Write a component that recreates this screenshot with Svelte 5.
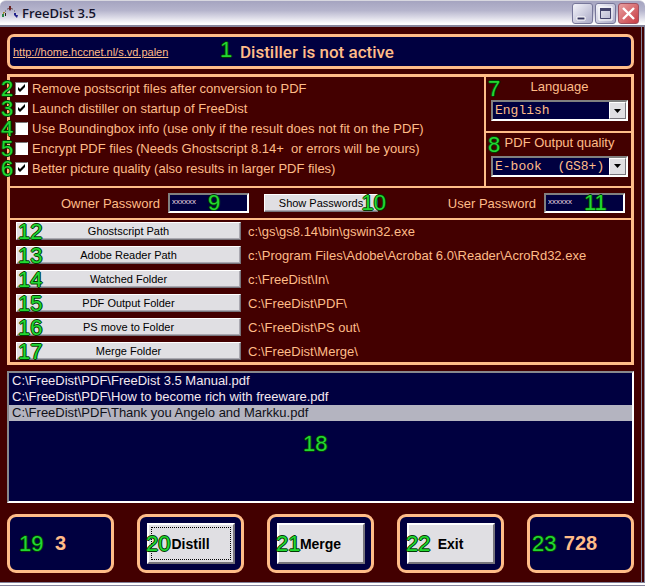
<script lang="ts">
  interface Option {
    id: number;
    label: string;
    checked: boolean;
  }

  interface Folder {
    id: number;
    label: string;
    path: string;
  }

  let options = $state<Option[]>([
    { id: 2, label: 'Remove postscript files after conversion to PDF', checked: true },
    { id: 3, label: 'Launch distiller on startup of FreeDist', checked: true },
    { id: 4, label: 'Use Boundingbox info (use only if the result does not fit on the PDF)', checked: false },
    { id: 5, label: 'Encrypt PDF files (Needs Ghostscript 8.14+  or errors will be yours)', checked: false },
    { id: 6, label: 'Better picture quality (also results in larger PDF files)', checked: true },
  ]);

  const folders: Folder[] = [
    { id: 12, label: 'Ghostscript Path', path: 'c:\\gs\\gs8.14\\bin\\gswin32.exe' },
    { id: 13, label: 'Adobe Reader Path', path: 'c:\\Program Files\\Adobe\\Acrobat 6.0\\Reader\\AcroRd32.exe' },
    { id: 14, label: 'Watched Folder', path: 'c:\\FreeDist\\In\\' },
    { id: 15, label: 'PDF Output Folder', path: 'C:\\FreeDist\\PDF\\' },
    { id: 16, label: 'PS move to Folder', path: 'C:\\FreeDist\\PS out\\' },
    { id: 17, label: 'Merge Folder', path: 'C:\\FreeDist\\Merge\\' },
  ];

  const files = [
    'C:\\FreeDist\\PDF\\FreeDist 3.5 Manual.pdf',
    'C:\\FreeDist\\PDF\\How to become rich with freeware.pdf',
    'C:\\FreeDist\\PDF\\Thank you Angelo and Markku.pdf',
  ];

  const actions = [
    { id: 20, label: 'Distill', focused: true },
    { id: 21, label: 'Merge', focused: false },
    { id: 22, label: 'Exit', focused: false },
  ];

  let selectedFile = $state(files[2]);
  let ownerPassword = $state('xxxxxx');
  let userPassword = $state('xxxxxx');
</script>

{#snippet badge(n: number, place: string)}
  <span class="badge {place}">{n}</span>
{/snippet}

{#snippet arrow()}
  <span class="arrow">
    <svg width="7" height="4" viewBox="0 0 7 4"><path d="M0 0h7L3.5 4z" fill="#000" /></svg>
  </span>
{/snippet}

<div class="window">
  <header class="titlebar">
    <svg class="app-icon" width="16" height="14" viewBox="0 0 16 14">
      <path d="M3 5h1M5 3h1M10 3h1M12 5h1" fill="none" stroke="#555" />
      <path d="M7 0h2v2h1L8 5 6 2h1z" fill="#6a2020" />
      <path d="M1 6h2v1H2v2H1z" fill="#a08a30" />
      <path d="M0 8h2v3H0z" fill="#2f8a4a" />
      <path d="M3 7h1v3H3z" fill="#222" />
      <path d="M12 7h2v2h2l-1 3-3-3z" fill="#22228a" />
    </svg>
    <h1>FreeDist 3.5</h1>
    <div class="caption-buttons">
      <button class="caption" aria-label="Minimize">
        <svg width="21" height="21" viewBox="0 0 21 21"><path d="M5 14h8v3H5z" fill="#33335c" stroke="#fff" /></svg>
      </button>
      <button class="caption" aria-label="Maximize">
        <svg width="21" height="21" viewBox="0 0 21 21">
          <path d="M4 4h13v13H4z" fill="none" stroke="#fff" />
          <path d="M5.500 6.500h10v9h-10z" fill="none" stroke="#44446c" />
          <path d="M5 5h11v3H5z" fill="#44446c" />
        </svg>
      </button>
      <button class="caption close" aria-label="Close">
        <svg width="21" height="21" viewBox="0 0 21 21"><path d="M5 5l11 11M16 5L5 16" stroke="#fff" stroke-width="2.400" /></svg>
      </button>
    </div>
  </header>

  <main>
    <section class="status">
      <a href="http://home.hccnet.nl/s.vd.palen">http://home.hccnet.nl/s.vd.palen</a>
      <strong>Distiller is not active</strong>
      {@render badge(1, 'at-status')}
    </section>

    <section class="settings">
      <div class="top">
        <div class="options">
          {#each options as option (option.id)}
            <label class="option">
              <input type="checkbox" bind:checked={option.checked} />
              <span>{option.label}</span>
              {@render badge(option.id, 'at-edge')}
            </label>
          {/each}
        </div>
        <div class="choices">
          <div class="choice">
            <label for="language">Language</label>
            <div class="combo">
              <select id="language"><option>English</option></select>
              {@render arrow()}
            </div>
            {@render badge(7, 'at-corner')}
          </div>
          <div class="choice">
            <label for="quality">PDF Output quality</label>
            <div class="combo">
              <select id="quality"><option>E-book&nbsp;&nbsp;(GS8+)</option></select>
              {@render arrow()}
            </div>
            {@render badge(8, 'at-corner')}
          </div>
        </div>
      </div>

      <div class="passwords">
        <label for="owner">Owner Password</label>
        <div class="field">
          <input id="owner" type="text" bind:value={ownerPassword} />
          {@render badge(9, 'at-middle')}
        </div>
        <button class="small show">Show Passwords{@render badge(10, 'at-end')}</button>
        <label class="user" for="user">User Password</label>
        <div class="field">
          <input id="user" type="text" bind:value={userPassword} />
          {@render badge(11, 'at-middle')}
        </div>
      </div>

      <div class="folders">
        {#each folders as folder (folder.id)}
          <div class="folder">
            <button class="small">{folder.label}{@render badge(folder.id, 'at-start')}</button>
            <span>{folder.path}</span>
          </div>
        {/each}
      </div>
    </section>

    <section class="files">
      <select size="8" aria-label="PDF files" bind:value={selectedFile}>
        {#each files as file (file)}
          <option value={file}>{file}</option>
        {/each}
      </select>
      {@render badge(18, 'at-list')}
    </section>

    <footer>
      <div class="tile count">3{@render badge(19, 'at-tile')}</div>
      {#each actions as action (action.id)}
        <div class="tile">
          <button class="action" class:focused={action.focused}>{action.label}</button>
          {@render badge(action.id, 'at-action')}
        </div>
      {/each}
      <div class="tile count">728{@render badge(23, 'at-total')}</div>
    </footer>
  </main>
</div>

<style>
  :global(body) {
    background: #fff;
  }
  .window {
    --peach: #ffbc88;
    --navy: #000040;
    --face: #e0dfe3;
    margin-right: 2px;
    font-family: 'Liberation Sans', Arial, sans-serif;
    font-size: 13px;
    color: var(--peach);
    border-bottom: 4px double #82829a;
  }
  .window * {
    box-sizing: border-box;
  }
  button,
  input,
  select {
    font: inherit;
    margin: 0;
    border-radius: 0;
  }
  .titlebar {
    display: flex;
    align-items: center;
    height: 27px;
    padding: 0 6px 0 2px;
    gap: 4px;
    border-top: 1px solid #d8d8e0;
    border-bottom: 2px solid #85859b;
    border-radius: 6px 6px 0 0;
    background: linear-gradient(#a5a4c0, #b6b5cd 40%, #dddce8 70%, #fff 95%);
    color: #14142c;
  }
  h1 {
    margin: 0;
    font-family: 'Open Sans', sans-serif;
    font-size: 13px;
    font-weight: 600;
  }
  .caption-buttons {
    display: flex;
    gap: 2px;
    margin-left: auto;
  }
  .caption {
    width: 21px;
    height: 21px;
    padding: 0;
    border: 1px solid #77779a;
    border-radius: 3px;
    background: linear-gradient(135deg, #f4f4fa, #a9a9c6);
  }
  .caption svg {
    display: block;
    margin: -1px;
  }
  .close {
    border-color: #a05060;
    background: linear-gradient(135deg, #e8a0a0, #c83c44);
  }
  main {
    display: flex;
    flex-direction: column;
    padding: 7px 7px 9px;
    background: #430000;
    border-right: 4px double #82829a;
  }
  .status {
    position: relative;
    display: flex;
    align-items: center;
    height: 35px;
    border: 3px solid var(--peach);
    border-radius: 7px;
    background: var(--navy);
  }
  .status a {
    width: 230px;
    padding-left: 3px;
    font-size: 11px;
    color: var(--peach);
  }
  strong {
    font-family: Roboto, sans-serif;
    font-size: 17px;
    font-weight: 500;
  }
  .settings {
    margin-top: 5px;
    border: 3px solid var(--peach);
  }
  .top {
    display: flex;
    border-bottom: 2px solid var(--peach);
  }
  .options {
    flex: 1;
    padding: 1px 0 8px 5px;
  }
  .option {
    position: relative;
    display: flex;
    align-items: center;
    gap: 4px;
    height: 20px;
    white-space: pre;
  }
  .option input {
    appearance: none;
    width: 13px;
    height: 13px;
    border: 1px solid;
    border-color: #777 #fff #fff #777;
    background: #fff;
  }
  .option input:checked {
    background: #fff url("data:image/svg+xml,%3Csvg xmlns='http://www.w3.org/2000/svg' viewBox='0 0 11 11'%3E%3Cpath d='M2 4v3l2 2 5-5V1L4 6z'/%3E%3C/svg%3E");
  }
  .choices {
    display: flex;
    flex-direction: column;
    width: 147px;
    border-left: 2px solid var(--peach);
  }
  .choice {
    position: relative;
    flex: 1;
    padding: 0 3px 0 5px;
  }
  .choice + .choice {
    border-top: 2px solid var(--peach);
  }
  .choice label {
    display: block;
    line-height: 20px;
    text-align: center;
  }
  .combo {
    position: relative;
    margin-top: 3px;
  }
  .combo select {
    appearance: none;
    display: block;
    width: 100%;
    height: 21px;
    padding: 0 2px;
    border: 2px solid;
    border-color: #808080 #fff #fff #808080;
    background: var(--navy);
    color: var(--peach);
    font-family: 'Liberation Mono', monospace;
  }
  .arrow {
    position: absolute;
    top: 2px;
    right: 2px;
    bottom: 2px;
    display: grid;
    place-items: center;
    width: 17px;
    border: 1px solid;
    border-color: #fff #77757c #77757c #fff;
    background: var(--face);
    pointer-events: none;
  }
  .passwords {
    display: flex;
    align-items: center;
    height: 32px;
    padding: 0 6px 0 51px;
    gap: 8px;
    border-bottom: 2px solid var(--peach);
  }
  .field {
    position: relative;
  }
  .field input {
    display: block;
    width: 81px;
    height: 20px;
    padding: 0 2px 4px;
    border: 2px solid;
    border-color: #808080 #fff #fff #808080;
    background: var(--navy);
    color: #e8d8e0;
    font-size: 8px;
  }
  .small {
    position: relative;
    height: 18px;
    padding: 0;
    border: 1px solid;
    border-color: #fff #77757c #77757c #fff;
    box-shadow: inset -1px -1px #aaa8b0;
    background: var(--face);
    color: #000;
    font-size: 11px;
    line-height: 14px;
  }
  .show {
    width: 114px;
    margin-left: 7px;
  }
  .user {
    margin-left: auto;
  }
  .folders {
    display: flex;
    flex-direction: column;
    gap: 6px;
    padding: 2px 6px;
  }
  .folder {
    display: flex;
    align-items: center;
    gap: 7px;
    height: 18px;
  }
  .folder .small {
    width: 225px;
  }
  .files {
    position: relative;
    margin-top: 6px;
  }
  .files select {
    display: block;
    width: 100%;
    height: 132px;
    padding: 0;
    border: 2px solid;
    border-color: #88888c #fff #fff #88888c;
    outline: none;
    overflow: hidden;
    background: var(--navy);
    color: #f4e8f0;
    font-size: 13px;
  }
  .files option {
    height: 16px;
    min-height: 16px;
    padding: 0 3px;
    line-height: 16px;
  }
  .files option:checked {
    background: linear-gradient(#b4b4c0, #b4b4c0);
    color: #101018;
  }
  footer {
    display: flex;
    justify-content: space-between;
    margin-top: 11px;
  }
  .tile {
    position: relative;
    display: grid;
    place-items: center;
    width: 107px;
    height: 59px;
    border: 3px solid var(--peach);
    border-radius: 9px;
    background: var(--navy);
  }
  .action {
    width: 88px;
    height: 41px;
    padding: 0;
    border: 2px solid;
    border-color: #fff #77757c #77757c #fff;
    background: var(--face);
    color: #000;
    font-size: 14px;
    font-weight: 700;
  }
  .focused {
    outline: 1px dotted #000;
    outline-offset: -5px;
  }
  .count {
    font-size: 20px;
    font-weight: 700;
  }
  .badge {
    position: absolute;
    z-index: 1;
    font-size: 22px;
    font-weight: 400;
    line-height: 20px;
    color: #22d832;
    text-shadow: 1px 0 #043c04, -1px 0 #043c04, 0 1px #043c04, 0 -1px #043c04;
    pointer-events: none;
  }
  .at-status {
    left: 210px;
    top: 3px;
  }
  .at-edge {
    left: -14px;
    top: 1px;
  }
  .at-corner {
    left: 2px;
    top: 2px;
  }
  .at-middle {
    left: 40px;
    top: 0;
  }
  .at-end {
    right: -9px;
    top: -2px;
  }
  .at-start {
    left: 1px;
    top: -1px;
  }
  .at-list {
    left: 296px;
    top: 63px;
  }
  .at-tile {
    left: 9px;
    top: 17px;
  }
  .at-total {
    left: 2px;
    top: 17px;
  }
  .at-action {
    left: 6px;
    top: 17px;
  }
</style>
